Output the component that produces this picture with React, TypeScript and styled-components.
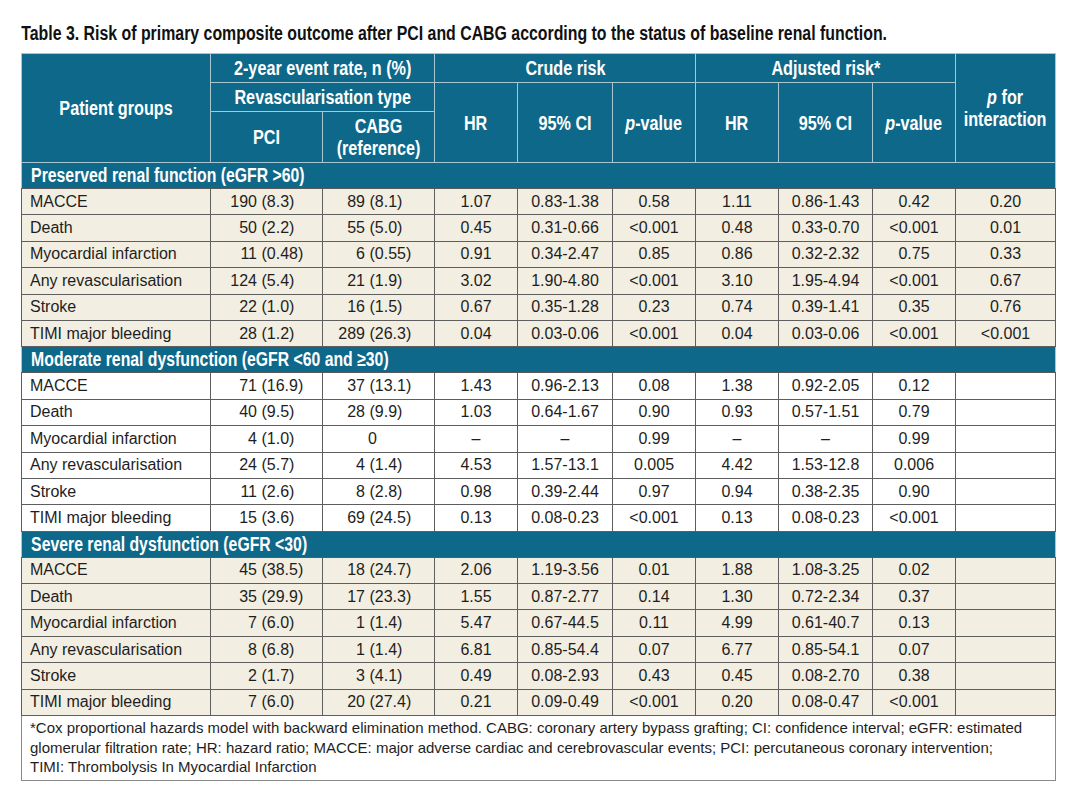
import React from 'react';
import styled, { createGlobalStyle } from 'styled-components';

const GlobalStyle = createGlobalStyle`
  html, body {
    margin: 0;
    padding: 0;
    background: #ffffff;
  }
`;

const TEAL = '#0e6889';
const NARROW = 0.81;
const HEAD_FONT = `"Liberation Sans", Arial, sans-serif`;
const BODY_FONT = `"Liberation Sans", Arial, sans-serif`;

type Row = {
  label: string;
  pci: [string, string];
  cabg: [string, string];
  vals: string[];
};

type Group = {
  title: string;
  shaded: boolean;
  rows: Row[];
};

const groups: Group[] = [
  {
    title: 'Preserved renal function (eGFR >60)',
    shaded: true,
    rows: [
      { label: 'MACCE', pci: ['190', '(8.3)'], cabg: ['89', '(8.1)'], vals: ['1.07', '0.83-1.38', '0.58', '1.11', '0.86-1.43', '0.42', '0.20'] },
      { label: 'Death', pci: ['50', '(2.2)'], cabg: ['55', '(5.0)'], vals: ['0.45', '0.31-0.66', '<0.001', '0.48', '0.33-0.70', '<0.001', '0.01'] },
      { label: 'Myocardial infarction', pci: ['11', '(0.48)'], cabg: ['6', '(0.55)'], vals: ['0.91', '0.34-2.47', '0.85', '0.86', '0.32-2.32', '0.75', '0.33'] },
      { label: 'Any revascularisation', pci: ['124', '(5.4)'], cabg: ['21', '(1.9)'], vals: ['3.02', '1.90-4.80', '<0.001', '3.10', '1.95-4.94', '<0.001', '0.67'] },
      { label: 'Stroke', pci: ['22', '(1.0)'], cabg: ['16', '(1.5)'], vals: ['0.67', '0.35-1.28', '0.23', '0.74', '0.39-1.41', '0.35', '0.76'] },
      { label: 'TIMI major bleeding', pci: ['28', '(1.2)'], cabg: ['289', '(26.3)'], vals: ['0.04', '0.03-0.06', '<0.001', '0.04', '0.03-0.06', '<0.001', '<0.001'] },
    ],
  },
  {
    title: 'Moderate renal dysfunction (eGFR <60 and \u226530)',
    shaded: false,
    rows: [
      { label: 'MACCE', pci: ['71', '(16.9)'], cabg: ['37', '(13.1)'], vals: ['1.43', '0.96-2.13', '0.08', '1.38', '0.92-2.05', '0.12', ''] },
      { label: 'Death', pci: ['40', '(9.5)'], cabg: ['28', '(9.9)'], vals: ['1.03', '0.64-1.67', '0.90', '0.93', '0.57-1.51', '0.79', ''] },
      { label: 'Myocardial infarction', pci: ['4', '(1.0)'], cabg: ['0', ''], vals: ['\u2013', '\u2013', '0.99', '\u2013', '\u2013', '0.99', ''] },
      { label: 'Any revascularisation', pci: ['24', '(5.7)'], cabg: ['4', '(1.4)'], vals: ['4.53', '1.57-13.1', '0.005', '4.42', '1.53-12.8', '0.006', ''] },
      { label: 'Stroke', pci: ['11', '(2.6)'], cabg: ['8', '(2.8)'], vals: ['0.98', '0.39-2.44', '0.97', '0.94', '0.38-2.35', '0.90', ''] },
      { label: 'TIMI major bleeding', pci: ['15', '(3.6)'], cabg: ['69', '(24.5)'], vals: ['0.13', '0.08-0.23', '<0.001', '0.13', '0.08-0.23', '<0.001', ''] },
    ],
  },
  {
    title: 'Severe renal dysfunction (eGFR <30)',
    shaded: true,
    rows: [
      { label: 'MACCE', pci: ['45', '(38.5)'], cabg: ['18', '(24.7)'], vals: ['2.06', '1.19-3.56', '0.01', '1.88', '1.08-3.25', '0.02', ''] },
      { label: 'Death', pci: ['35', '(29.9)'], cabg: ['17', '(23.3)'], vals: ['1.55', '0.87-2.77', '0.14', '1.30', '0.72-2.34', '0.37', ''] },
      { label: 'Myocardial infarction', pci: ['7', '(6.0)'], cabg: ['1', '(1.4)'], vals: ['5.47', '0.67-44.5', '0.11', '4.99', '0.61-40.7', '0.13', ''] },
      { label: 'Any revascularisation', pci: ['8', '(6.8)'], cabg: ['1', '(1.4)'], vals: ['6.81', '0.85-54.4', '0.07', '6.77', '0.85-54.1', '0.07', ''] },
      { label: 'Stroke', pci: ['2', '(1.7)'], cabg: ['3', '(4.1)'], vals: ['0.49', '0.08-2.93', '0.43', '0.45', '0.08-2.70', '0.38', ''] },
      { label: 'TIMI major bleeding', pci: ['7', '(6.0)'], cabg: ['20', '(27.4)'], vals: ['0.21', '0.09-0.49', '<0.001', '0.20', '0.08-0.47', '<0.001', ''] },
    ],
  },
];

const colWidths = [189, 112, 112, 83, 95, 83, 83, 94, 83, 100];

const App = () => {
  return (
    <Page>
      <GlobalStyle />
      <Title>
        <Squeeze>
          Table 3. Risk of primary composite outcome after PCI and CABG according to the status of baseline renal function.
        </Squeeze>
      </Title>
      <Table>
        <colgroup>
          {colWidths.map((w, i) => (
            <col key={i} style={{ width: w }} />
          ))}
        </colgroup>
        <thead>
          <HeadRow $h={29}>
            <HeadCell rowSpan={3}>
              <Squeeze>Patient groups</Squeeze>
            </HeadCell>
            <HeadCell colSpan={2}>
              <Squeeze>2-year event rate, n (%)</Squeeze>
            </HeadCell>
            <HeadCell colSpan={3}>
              <Squeeze>Crude risk</Squeeze>
            </HeadCell>
            <HeadCell colSpan={3}>
              <Squeeze>Adjusted risk*</Squeeze>
            </HeadCell>
            <HeadCell rowSpan={3}>
              <Squeeze>
                <em>p</em> for
                <br />
                interaction
              </Squeeze>
            </HeadCell>
          </HeadRow>
          <HeadRow $h={29}>
            <HeadCell colSpan={2}>
              <Squeeze>Revascularisation type</Squeeze>
            </HeadCell>
            <HeadCell rowSpan={2}>
              <Squeeze>HR</Squeeze>
            </HeadCell>
            <HeadCell rowSpan={2}>
              <Squeeze>95% CI</Squeeze>
            </HeadCell>
            <HeadCell rowSpan={2}>
              <Squeeze>
                <em>p</em>-value
              </Squeeze>
            </HeadCell>
            <HeadCell rowSpan={2}>
              <Squeeze>HR</Squeeze>
            </HeadCell>
            <HeadCell rowSpan={2}>
              <Squeeze>95% CI</Squeeze>
            </HeadCell>
            <HeadCell rowSpan={2}>
              <Squeeze>
                <em>p</em>-value
              </Squeeze>
            </HeadCell>
          </HeadRow>
          <HeadRow $h={51}>
            <HeadCell>
              <Squeeze>PCI</Squeeze>
            </HeadCell>
            <HeadCell>
              <Squeeze>
                CABG
                <br />
                (reference)
              </Squeeze>
            </HeadCell>
          </HeadRow>
        </thead>
        <tbody>
          {groups.map((g) => (
            <React.Fragment key={g.title}>
              <GroupRow>
                <GroupCell colSpan={10}>
                  <Squeeze>{g.title}</Squeeze>
                </GroupCell>
              </GroupRow>
              {g.rows.map((r) => (
                <DataRow key={r.label} $shaded={g.shaded}>
                  <LabelCell>{r.label}</LabelCell>
                  <CountCell $pad={6}>
                    <Count>{r.pci[0]}</Count> {r.pci[1]}
                  </CountCell>
                  <CountCell $pad={r.cabg[1] ? 2 : 14}>
                    <Count>{r.cabg[0]}</Count> {r.cabg[1]}
                  </CountCell>
                  {r.vals.map((v, i) => (
                    <NumCell key={i}>{v}</NumCell>
                  ))}
                </DataRow>
              ))}
            </React.Fragment>
          ))}
        </tbody>
        <tfoot>
          <tr>
            <FootCell colSpan={10}>
              *Cox proportional hazards model with backward elimination method. CABG: coronary artery bypass grafting; CI: confidence interval; eGFR: estimated
              <br />
              glomerular filtration rate; HR: hazard ratio; MACCE: major adverse cardiac and cerebrovascular events; PCI: percutaneous coronary intervention;
              <br />
              TIMI: Thrombolysis In Myocardial Infarction
            </FootCell>
          </tr>
        </tfoot>
      </Table>
    </Page>
  );
};

const Page = styled.div`
  width: 1077px;
  padding: 23px 22px 20px 21px;
  box-sizing: border-box;
`;

/* condensed bold type: the face is laid out wide, then drawn narrow */
const Squeeze = styled.div`
  width: calc(100% / ${NARROW});
  margin-left: calc((100% - 100% / ${NARROW}) / 2);
  transform: scaleX(${NARROW});
  white-space: nowrap;
`;

const Title = styled.h1`
  margin: 0 0 9px;
  font-family: ${HEAD_FONT};
  font-size: 19.6px;
  line-height: 21px;
  font-weight: bold;
  color: #111;
`;

const Table = styled.table`
  width: 1034px;
  table-layout: fixed;
  border-collapse: collapse;
  border: 1px solid #8a8a8a;
`;

const HeadRow = styled.tr<{ $h: number }>`
  height: ${(p) => p.$h}px;
`;

const HeadCell = styled.th`
  background: ${TEAL};
  color: #fff;
  font-family: ${HEAD_FONT};
  font-size: 20px;
  line-height: 22px;
  font-weight: bold;
  text-align: center;
  vertical-align: middle;
  padding: 0;
  border: 1px solid #a9c7d3;

  em {
    font-style: italic;
  }
`;

const GroupRow = styled.tr`
  height: 26px;
`;

const GroupCell = styled.td`
  background: ${TEAL};
  color: #fff;
  font-family: ${HEAD_FONT};
  font-size: 19.5px;
  font-weight: bold;
  padding: 0 0 0 9px;
  border: 1px solid #a9c7d3;
  border-bottom-color: #5a5a5a;
`;

const DataRow = styled.tr<{ $shaded: boolean }>`
  height: 26.4px;
  background: ${(p) => (p.$shaded ? '#f2eee1' : '#ffffff')};
`;

const BodyCell = styled.td`
  font-family: ${BODY_FONT};
  font-size: 16px;
  color: #1e1e1e;
  padding: 0;
  border: 1px solid #5e5e5e;
  white-space: nowrap;
  vertical-align: middle;
`;

const LabelCell = styled(BodyCell)`
  padding-left: 8px;
`;

const CountCell = styled(BodyCell)<{ $pad: number }>`
  padding-left: ${(p) => p.$pad}px;
`;

const Count = styled.span`
  display: inline-block;
  width: 40px;
  text-align: right;
`;

const NumCell = styled(BodyCell)`
  text-align: center;
`;

const FootCell = styled.td`
  font-family: ${BODY_FONT};
  font-size: 15px;
  line-height: 19.5px;
  color: #1e1e1e;
  padding: 2px 8px 3px;
  border: 1px solid #8a8a8a;
  white-space: nowrap;
`;

export default App;
